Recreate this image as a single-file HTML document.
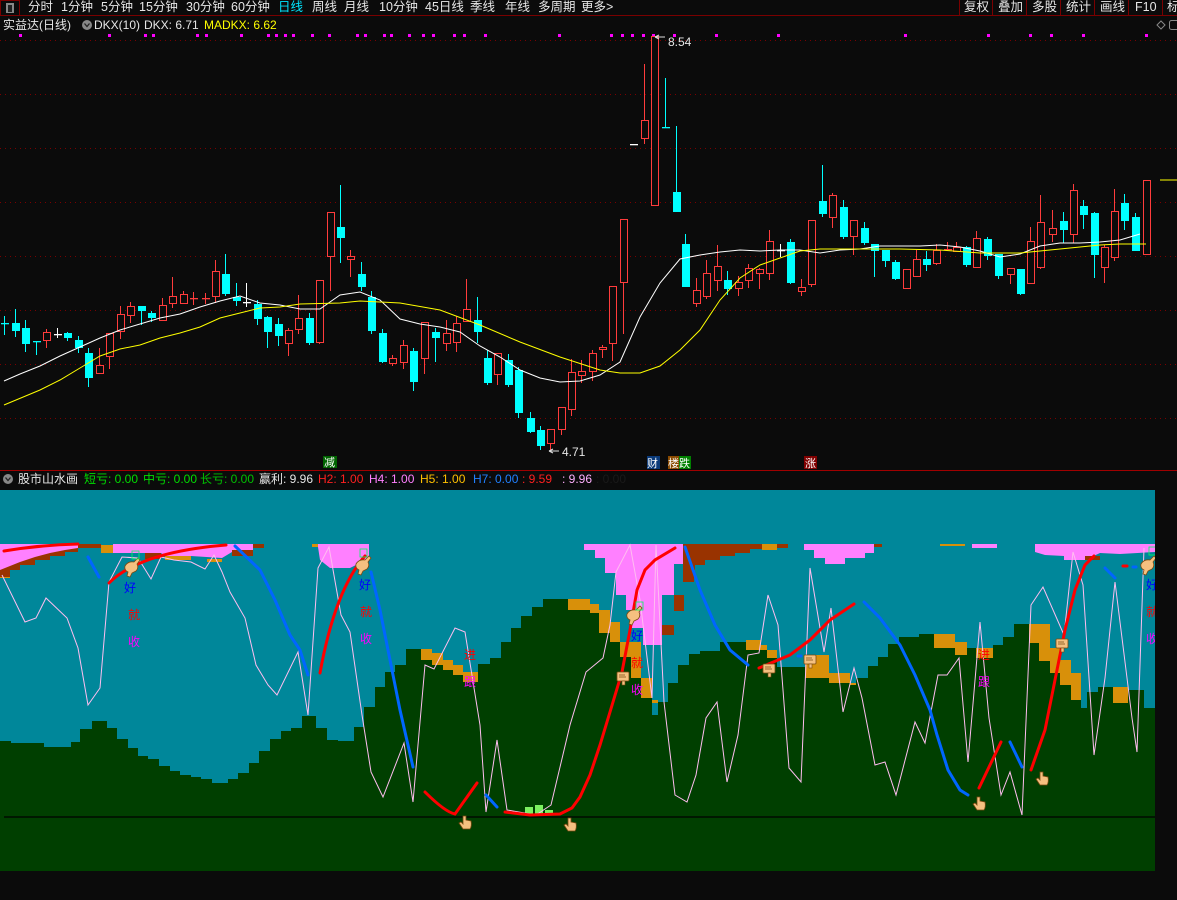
<!DOCTYPE html>
<html><head><meta charset="utf-8">
<style>
html,body{margin:0;padding:0;background:#0b0b0b;width:1177px;height:900px;overflow:hidden;font-family:"Liberation Sans","Noto Sans CJK SC",sans-serif;}
svg{position:absolute;left:0;top:0}
text{font-family:"Liberation Sans","Noto Sans CJK SC",sans-serif;}
</style></head>
<body>
<svg id="s" width="1177" height="900" viewBox="0 0 1177 900" xmlns="http://www.w3.org/2000/svg">
<rect width="1177" height="900" fill="#0b0b0b"/>
<!-- top toolbar -->
<line x1="0" y1="15.5" x2="1177" y2="15.5" stroke="#7a0000"/>
<rect x="0.5" y="0.5" width="19" height="15" fill="none" stroke="#7a0000"/>
<rect x="6" y="3" width="8" height="10" fill="#888"/><rect x="8" y="5" width="4" height="7" fill="#222"/>
<g font-size="12.5" fill="#e6e6e6">
<text x="28" y="11">分时</text><text x="61" y="11">1分钟</text><text x="101" y="11">5分钟</text><text x="139" y="11">15分钟</text><text x="186" y="11">30分钟</text><text x="231" y="11">60分钟</text><text x="278" y="11" fill="#00e5ff">日线</text><text x="312" y="11">周线</text><text x="344" y="11">月线</text><text x="379" y="11">10分钟</text><text x="425" y="11">45日线</text><text x="470" y="11">季线</text><text x="505" y="11">年线</text><text x="538" y="11">多周期</text><text x="581" y="11">更多&gt;</text>
<text x="964" y="11">复权</text><text x="998" y="11">叠加</text><text x="1032" y="11">多股</text><text x="1066" y="11">统计</text><text x="1100" y="11">画线</text><text x="1135" y="11">F10</text><text x="1167" y="11">标</text>
</g>
<g stroke="#7a0000"><line x1="959.5" y1="0" x2="959.5" y2="15"/><line x1="992.5" y1="0" x2="992.5" y2="15"/><line x1="1026.5" y1="0" x2="1026.5" y2="15"/><line x1="1060.5" y1="0" x2="1060.5" y2="15"/><line x1="1094.5" y1="0" x2="1094.5" y2="15"/><line x1="1128.5" y1="0" x2="1128.5" y2="15"/><line x1="1162.5" y1="0" x2="1162.5" y2="15"/></g>
<!-- info row -->
<g font-size="12">
<text x="3" y="29" fill="#e6e6e6">实益达(日线)</text>
<circle cx="87" cy="25" r="5" fill="#888"/><path d="M84.5 23.5 L87 26.5 L89.5 23.5" stroke="#222" fill="none" stroke-width="1.3"/>
<text x="94" y="29" fill="#e6e6e6">DKX(10)</text>
<text x="144" y="29" fill="#e6e6e6">DKX: 6.71</text>
<text x="204" y="29" fill="#ffff00">MADKX: 6.62</text>
</g>
<path d="M1157 25 l4 -4 l4 4 l-4 4 z" fill="none" stroke="#888"/>
<rect x="1169.5" y="20.5" width="9" height="9" rx="2" fill="none" stroke="#888"/>
<g id="grid" stroke="#7a0000" stroke-dasharray="1,4"></g>
<g id="dots" fill="#ff00ff"></g>
<g id="candles"></g>
<polyline fill="none" stroke="#ffffff" stroke-width="1" points="4,381 20,374 40,366 60,356 80,347 100,338 120,330 140,324 160,318 180,314 200,307 220,301 240,296 260,303 280,305 300,309 320,309 340,295 360,292 380,300 400,319 420,324 440,327 460,332 480,346 500,357 520,370 540,378 560,382 580,381 600,375 620,362 640,317 660,283 680,259 700,255 720,252 740,250 760,251 780,250 800,250 820,253 840,250 860,249 880,246 900,246 920,246 940,245 960,247 980,251 1000,257 1020,254 1040,246 1060,243 1080,243 1100,242 1120,240 1140,234"/>
<polyline fill="none" stroke="#ffff00" stroke-width="1" points="4,405 40,390 60,380 80,368 100,356 120,349 140,345 160,338 180,333 200,327 220,318 240,313 260,308 280,307 300,304 340,303 360,301 400,303 440,310 480,325 520,342 560,357 600,370 620,373 640,373 660,366 680,350 700,330 720,300 740,278 760,265 780,258 800,251 820,249 860,249 900,249 940,250 980,253 1020,253 1040,251 1060,249 1080,247 1100,245 1120,244 1146,244"/>
<line x1="1160" y1="180" x2="1177" y2="180" stroke="#ffff00"/>
<g font-size="12" fill="#e6e6e6">
<path d="M655 37 l4 -2 M655 37 l4 2 M655 37 h10" stroke="#ddd" fill="none"/>
<text x="668" y="46">8.54</text>
<path d="M549 451 l4 -2 M549 451 l4 2 M549 451 h10" stroke="#ddd" fill="none"/>
<text x="562" y="456">4.71</text>
</g>
<rect x="323" y="456" width="14" height="12" fill="#006400"/><text x="324" y="466" font-size="11" fill="#fff">减</text>
<rect x="647" y="456" width="13" height="13" fill="#0a3a7a"/><text x="647" y="467" font-size="11" fill="#fff">财</text>
<rect x="668" y="456" width="11" height="13" fill="#8a4a00"/><rect x="679" y="456" width="12" height="13" fill="#008000"/><text x="668" y="467" font-size="11" fill="#fff">楼跌</text>
<rect x="804" y="456" width="13" height="13" fill="#800000"/><text x="805" y="467" font-size="11" fill="#fff">涨</text>
<!-- separator -->
<line x1="0" y1="470.5" x2="1177" y2="470.5" stroke="#a00000"/>
<g font-size="12">
<circle cx="8" cy="479" r="5" fill="#888"/><path d="M5.5 477.5 L8 480.5 L10.5 477.5" stroke="#222" fill="none" stroke-width="1.3"/>
<text x="18" y="483" fill="#e6e6e6">股市山水画</text>
<text x="84" y="483" fill="#00dd00">短亏: 0.00</text>
<text x="143" y="483" fill="#00dd00">中亏: 0.00</text>
<text x="200" y="483" fill="#00c000">长亏: 0.00</text>
<text x="259" y="483" fill="#e6e6e6">赢利: 9.96</text>
<text x="318" y="483" fill="#ff2020">H2: 1.00</text>
<text x="369" y="483" fill="#ff80ff">H4: 1.00</text>
<text x="420" y="483" fill="#ffc000">H5: 1.00</text>
<text x="473" y="483" fill="#2080ff">H7: 0.00</text>
<text x="522" y="483" fill="#ff2020">: 9.59</text>
<text x="562" y="483" fill="#ffb0ff">: 9.96</text>
<text x="596" y="483" fill="#1a1a1a">: 0.00</text>
</g>
<!-- lower panel -->
<rect x="0" y="490" width="1155" height="381" fill="#00879a"/>
<polygon id="green" fill="#003f00"/>
<g id="gold" fill="#d8900a"></g>
<g id="pinkg"></g>
<g id="rticks" stroke="#a00000" stroke-dasharray="1,4"></g>
<line x1="4" y1="817" x2="1155" y2="817" stroke="#000" stroke-width="1.2"/>
<g fill="#7cf060"><rect x="525" y="807" width="8" height="8"/><rect x="535" y="805" width="8" height="10"/><rect x="545" y="810" width="8" height="5"/></g>
<polyline fill="none" stroke="#ffbef0" stroke-width="1" points="2,575 25,622 36,618 46,598 67,618 78,648 88,705 100,688 109,582 122,557 138,558 151,579 161,557 174,560 191,562 205,569 214,555 222,572 230,592 245,618 256,665 268,685 277,695 298,652 308,715 318,568 329,547 341,615 350,632 362,715 371,772 383,797 404,743 413,802 425,665 434,669 455,628 465,632 480,725 486,812 497,740 507,810 536,815 551,805 570,725 586,672 603,658 610,625 616,572 630,545 640,600 652,698 656,545 664,702 675,795 687,802 696,775 706,718 717,702 727,782 738,735 748,655 759,653 768,595 778,625 789,768 801,782 810,568 824,652 831,608 843,712 854,668 862,698 875,765 885,762 896,795 915,722 925,743 938,675 947,675 959,658 968,762 980,622 989,718 1001,795 1010,772 1022,815 1031,605 1043,587 1064,635 1073,552 1083,585 1094,755 1105,678 1115,582 1132,718 1137,752 1144,548"/>
<g fill="none" stroke="#ff0000" stroke-width="3" stroke-linecap="round">
<path d="M4 551 Q40 545 78 544"/>
<path d="M109 583 Q140 552 226 545"/>
<path d="M320 673 Q335 590 365 556"/>
<path d="M425 792 Q445 812 455 814 L477 783"/>
<polyline points="505,812 530,815 560,814 572,808 580,797 590,775 600,745 610,712 622,672 630,630 637,590 645,570 655,560 675,548"/>
<polyline points="759,668 790,655 810,640 830,620 854,604"/>
<path d="M979 788 L1001 742"/>
<polyline points="1031,770 1045,730 1055,680 1065,630 1075,590 1085,565 1094,556"/>
<path d="M1123 566 h4"/>
</g>
<g fill="none" stroke="#0066ff" stroke-width="3" stroke-linecap="round">
<path d="M88 557 L99 577"/>
<polyline points="235,546 260,570 275,600 290,635 300,650 308,675"/>
<polyline points="371,572 380,610 390,660 400,710 413,767"/>
<path d="M486 795 L497 807"/>
<polyline points="685,547 700,590 715,625 730,650 748,665"/>
<path d="M798 656 h3"/>
<polyline points="864,602 880,618 900,645 915,675 930,710 937,735 948,770 960,790 968,795"/>
<path d="M1010 742 L1022 767"/>
<path d="M1105 568 L1115 578"/>
<path d="M1133 567 h3"/>
</g>
<g font-size="12">
<text x="124" y="592" fill="#0000ff">好</text><text x="128" y="619" fill="#ff0000">就</text><text x="128" y="646" fill="#ff00ff">收</text>
<text x="359" y="589" fill="#0000ff">好</text><text x="360" y="616" fill="#ff0000">就</text><text x="360" y="643" fill="#ff00ff">收</text>
<text x="464" y="659" fill="#ff0000">进</text><text x="464" y="686" fill="#ff00ff">跟</text>
<text x="631" y="640" fill="#0000ff">好</text><text x="631" y="667" fill="#ff0000">就</text><text x="631" y="694" fill="#ff00ff">收</text>
<text x="978" y="659" fill="#ff0000">进</text><text x="978" y="686" fill="#ff00ff">跟</text>
<text x="1146" y="589" fill="#0000ff">好</text><text x="1146" y="616" fill="#ff0000">就</text><text x="1146" y="643" fill="#ff00ff">收</text>
</g>
<g id="icons"></g>
<rect x="1155" y="490" width="22" height="381" fill="#0b0b0b"/>
</svg>
<script>
const S="http://www.w3.org/2000/svg";
function el(p,t,a){const e=document.createElementNS(S,t);for(const k in a)e.setAttribute(k,a[k]);document.getElementById(p).appendChild(e);return e;}
[40,94,148,202,256,310,364,418].forEach(y=>el('grid','line',{x1:0,x2:1177,y1:y+.5,y2:y+.5}));
[544,599,653,708,762,816].forEach(y=>el('rticks','line',{x1:1157,x2:1177,y1:y+.5,y2:y+.5}));
[20,109,145,153,197,206,241,268,276,285,293,312,329,357,365,384,391,409,423,433,454,464,485,559,611,622,632,643,653,674,716,778,905,988,1030,1051,1083,1146].forEach(x=>el('dots','rect',{x:x-1,y:34,width:3,height:3}));
const C=[[4,323,323,316,334,'c'],[15,323,330,309,336,'c'],[25,328,343,320,351,'c'],[36,341,341,341,354,'c'],[46,332,340,329,347,'r'],[57,334,334,328,337,'w'],[67,333,337,332,340,'c'],[78,340,347,336,352,'c'],[88,353,377,348,386,'c'],[99,365,373,348,373,'r'],[109,333,356,333,368,'r'],[120,314,331,306,338,'r'],[130,306,315,302,322,'r'],[141,306,310,306,324,'c'],[151,313,317,311,321,'c'],[162,305,320,298,320,'r'],[172,296,303,277,307,'r'],[183,294,303,291,303,'r'],[193,298,298,292,304,'r'],[205,298,298,293,303,'r'],[215,271,296,260,302,'r'],[225,274,293,254,295,'c'],[236,297,300,283,305,'c'],[246,302,302,283,306,'w'],[257,304,318,300,324,'c'],[267,317,331,316,347,'c'],[278,324,335,318,345,'c'],[288,330,343,328,355,'r'],[298,318,329,295,333,'r'],[309,318,342,313,344,'c'],[319,280,342,280,343,'r'],[330,212,256,212,290,'r'],[340,227,237,185,262,'c'],[350,256,259,250,276,'r'],[361,274,286,262,290,'c'],[371,297,330,291,333,'c'],[382,333,361,329,362,'c'],[392,358,363,355,365,'r'],[403,345,362,340,368,'r'],[413,351,381,348,390,'c'],[424,322,358,322,373,'r'],[435,332,337,328,361,'c'],[446,333,343,320,350,'r'],[456,323,342,316,351,'r'],[466,309,321,279,321,'r'],[477,320,331,297,342,'c'],[487,358,382,350,384,'c'],[497,353,374,353,384,'r'],[508,360,384,354,386,'c'],[518,370,412,367,417,'c'],[530,418,431,412,432,'c'],[540,430,445,426,449,'c'],[550,429,443,429,450,'r'],[561,407,429,407,434,'r'],[571,372,409,359,415,'r'],[581,371,375,360,382,'r'],[592,353,371,350,380,'r'],[602,347,349,345,357,'r'],[612,286,343,286,360,'r'],[623,219,282,219,333,'r'],[633,144,144,144,144,'w'],[644,120,138,64,143,'r'],[654,36,205,36,205,'r'],[665,127,127,78,127,'c'],[676,192,211,126,211,'c'],[685,244,286,234,286,'c'],[696,290,303,278,306,'r'],[706,273,296,260,298,'r'],[717,266,280,245,290,'r'],[727,280,288,271,294,'c'],[738,282,288,276,295,'r'],[748,268,280,264,287,'r'],[759,269,273,268,288,'r'],[769,241,273,230,279,'r'],[780,250,250,244,256,'w'],[790,242,282,239,283,'c'],[801,287,291,279,295,'r'],[811,220,284,220,286,'r'],[822,201,213,165,216,'c'],[832,195,217,193,227,'r'],[843,207,236,200,238,'c'],[853,220,236,220,254,'r'],[864,228,242,222,244,'c'],[874,244,250,244,276,'c'],[885,250,260,250,266,'c'],[895,262,278,260,279,'c'],[906,269,288,269,288,'r'],[916,259,276,250,276,'r'],[926,259,264,251,270,'c'],[936,250,263,244,264,'r'],[947,249,250,242,250,'r'],[956,247,251,242,251,'r'],[966,247,264,246,266,'c'],[976,238,267,231,267,'r'],[987,239,255,237,259,'c'],[998,254,275,254,278,'c'],[1010,268,274,268,283,'r'],[1020,269,293,269,294,'c'],[1030,241,283,227,283,'r'],[1040,222,267,195,268,'r'],[1052,228,234,210,241,'r'],[1063,221,229,212,242,'c'],[1073,190,234,184,242,'r'],[1083,206,214,200,228,'c'],[1094,213,254,212,277,'c'],[1104,247,267,245,282,'r'],[1114,211,257,189,260,'r'],[1124,203,220,194,229,'c'],[1135,217,250,213,250,'c'],[1146,180,254,180,254,'r']];
C.forEach(([x,t,b,h,l,c])=>{
 const col=c=='r'?'#ff3c3c':c=='c'?'#00ffff':'#ffffff';
 el('candles','line',{x1:x+.5,x2:x+.5,y1:h,y2:l+1,stroke:col});
 if(b-t<1.5){el('candles','rect',{x:x-3,y:t,width:8,height:1.3,fill:col});}
 else if(c=='r'){el('candles','rect',{x:x-2.5,y:t+.5,width:7,height:b-t,fill:'#0b0b0b',stroke:col});}
 else el('candles','rect',{x:x-3,y:t,width:8,height:b-t+1,fill:col});
});
// green profile steps [xstart, ytop]
const G=[[0,741],[11,743],[44,747],[71,742],[80,729],[92,721],[107,728],[117,739],[128,748],[138,756],[148,759],[159,766],[170,771],[180,775],[191,777],[201,779],[212,783],[228,779],[238,773],[249,763],[259,751],[270,739],[281,731],[291,728],[302,716],[316,728],[327,740],[338,741],[354,727],[364,707],[375,687],[385,672],[395,665],[406,649],[421,660],[432,665],[443,670],[453,675],[463,682],[478,664],[490,658],[501,642],[511,628],[521,616],[532,607],[543,599],[568,610],[590,613],[599,633],[610,642],[620,657],[631,678],[641,698],[652,715],[658,702],[668,683],[678,665],[689,654],[700,651],[720,642],[746,650],[761,650],[767,658],[777,667],[788,667],[805,678],[829,683],[850,685],[856,678],[868,666],[878,657],[888,644],[899,637],[919,634],[934,648],[955,655],[967,648],[976,658],[993,645],[1003,637],[1014,624],[1029,643],[1039,661],[1050,673],[1060,685],[1071,700],[1081,708],[1087,692],[1098,687],[1113,703],[1128,690],[1144,708],[1155,708]];
let pts=[];G.forEach((g,i)=>{if(i<G.length-1){pts.push(g[0]+','+g[1]);pts.push(G[i+1][0]+','+g[1]);}});
pts.push('1155,871','0,871');document.getElementById('green').setAttribute('points',pts.join(' '));
[[421,432,649,660],[432,443,653,665],[443,453,660,670],[453,463,665,675],[463,478,672,682],[568,590,599,610],[590,599,604,613],[599,610,610,633],[610,620,622,642],[620,631,642,657],[631,641,642,678],[641,652,678,698],[652,658,700,703],[746,761,640,650],[761,767,645,650],[767,777,650,658],[805,829,655,678],[829,850,673,683],[850,856,683,685],[934,955,634,648],[955,967,642,655],[976,993,648,658],[1029,1039,624,643],[1039,1050,624,661],[1050,1060,648,673],[1060,1071,660,685],[1071,1081,673,700],[1113,1128,687,703],
[0,10,573,578],[101,113,545,553],[165,191,556,560],[207,222,559,562],[312,318,544,547],[762,777,544,550],[940,965,544,546]].forEach(([a,b,c,d])=>el('gold','rect',{x:a,y:c,width:b-a,height:d-c}));
const P='#ff80ff',B='#993300';
// pink shapes
el('pinkg','polygon',{fill:B,points:'0,544 86,544 86,548 78,548 78,552 65,552 65,556 50,556 50,560 35,560 35,565 20,565 20,570 10,570 10,577 0,577'});
el('pinkg','polygon',{fill:P,points:'0,544 78,544 78,548 65,550 50,553 35,557 20,562 0,570'});
el('pinkg','rect',{fill:B,x:86,y:544,width:15,height:4});
el('pinkg','polygon',{fill:P,points:'113,544 253,544 253,550 232,552 222,558 191,556 165,556 161,553 145,553 130,553 113,553'});
el('pinkg','rect',{fill:B,x:145,y:553,width:16,height:6});
el('pinkg','rect',{fill:B,x:232,y:550,width:21,height:6});
el('pinkg','rect',{fill:B,x:253,y:544,width:11,height:4});
el('pinkg','polygon',{fill:P,points:'318,544 369,544 369,558 362,562 350,568 330,568 320,560 318,547'});
el('pinkg','polygon',{fill:B,points:'683,544 762,544 762,549 750,549 750,553 735,553 735,556 720,556 720,560 705,560 705,565 695,565 695,570 683,570'});
el('pinkg','rect',{fill:B,x:683,y:564,width:11,height:18});
el('pinkg','rect',{fill:B,x:777,y:544,width:11,height:4});
el('pinkg','polygon',{fill:P,points:'584,544 683,544 683,564 674,564 674,595 662,595 662,645 643,645 643,628 632,628 632,610 626,610 626,595 616,595 616,573 605,573 605,558 595,558 595,550 584,550'});
el('pinkg','rect',{fill:B,x:674,y:595,width:10,height:16});
el('pinkg','rect',{fill:B,x:662,y:625,width:12,height:10});
el('pinkg','polygon',{fill:P,points:'804,544 874,544 874,553 865,553 865,558 845,558 845,564 825,564 825,558 814,558 814,550 804,550'});
el('pinkg','rect',{fill:B,x:874,y:544,width:8,height:3});
el('pinkg','rect',{fill:P,x:972,y:544,width:25,height:4});
el('pinkg','polygon',{fill:P,points:'1035,544 1155,544 1155,552 1120,554 1100,553 1085,560 1064,560 1064,556 1045,555 1035,552'});
el('pinkg','rect',{fill:B,x:1085,y:556,width:15,height:4});
// hand icons
function hand(x,y){el('icons','path',{d:`M${x} ${y+3} q3 -5 9 -4 l4 -4 l2 2 l-3 4 q2 4 -1 7 l-4 2 l-2 4 l-3 -1 l1 -4 q-4 -2 -3 -6z`,fill:'#f5c080',stroke:'#7a4a10','stroke-width':.8});}
[[125,563],[356,561],[627,611],[1141,561]].forEach(p=>hand(p[0],p[1]));
function hand2(x,y){el('icons','path',{d:`M${x} ${y} v8 l-2 -2 l-2 1 l4 6 h7 q2 -3 1 -8 l-5 -1 v-4 z`,fill:'#f5c080',stroke:'#7a4a10','stroke-width':.8});}
[[463,816],[568,818],[977,797],[1040,772]].forEach(p=>hand2(p[0],p[1]));
function sign(x,y){el('icons','rect',{x:x,y:y,width:12,height:9,rx:1,fill:'#f5c080',stroke:'#7a4a10','stroke-width':.8});el('icons','rect',{x:x+5,y:y+9,width:3,height:4,fill:'#f5c080',stroke:'#7a4a10','stroke-width':.6});el('icons','path',{d:`M${x+2} ${y+3}h6M${x+2} ${y+5}h7`,stroke:'#7a4a10','stroke-width':.8});}
[[617,672],[763,664],[804,655],[1056,639]].forEach(p=>sign(p[0],p[1]));
[[134,554],[362,552],[638,605],[1151,550]].forEach(p=>el('icons','rect',{x:p[0]-2,y:p[1]-3,width:7,height:8,fill:'none',stroke:'#00ff60','stroke-width':.8}));
</script>
</body></html>
